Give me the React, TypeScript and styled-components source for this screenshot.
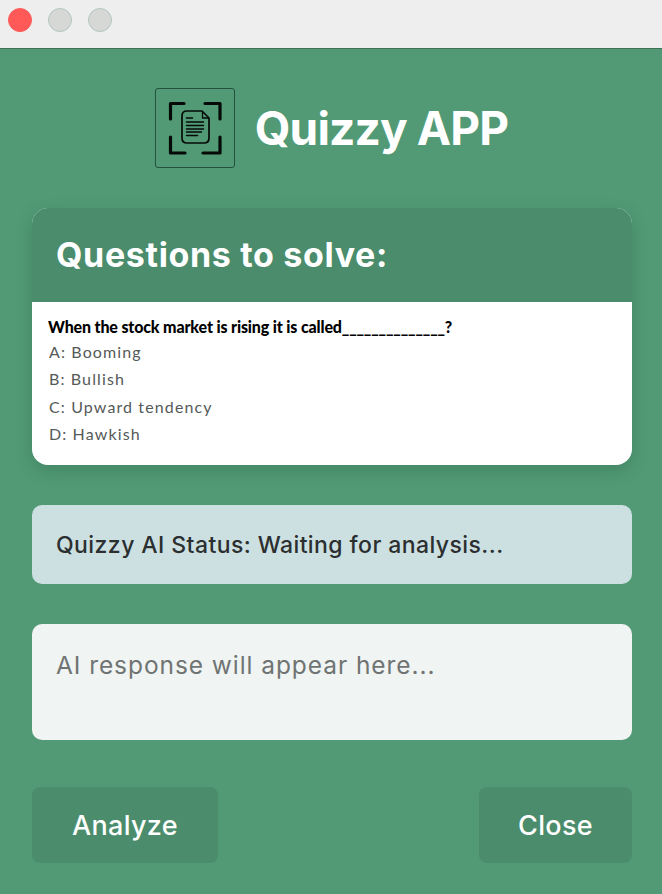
import React from "react";
import styled, { createGlobalStyle } from "styled-components";

const Global = createGlobalStyle`
  html, body { margin: 0; padding: 0; background: #519a75; }
  * { box-sizing: border-box; }
`;

const Window = styled.div`
  width: 662px;
  height: 894px;
  display: flex;
  flex-direction: column;
  overflow: hidden;
  background: #519a75;
  font-family: "Inter", "Liberation Sans", sans-serif;
`;

const TitleBar = styled.div`
  height: 49px;
  flex: none;
  display: flex;
  align-items: flex-start;
  gap: 16px;
  padding: 8px 8px 0;
  background: #eeeeee;
  border-bottom: 1px solid #3f7159;
`;

const Light = styled.span<{ $active?: boolean }>`
  width: 24px;
  height: 24px;
  border-radius: 50%;
  background: ${(p) => (p.$active ? "#ff5a57" : "#d6d8d6")};
  border: 1px solid ${(p) => (p.$active ? "#ff5a57" : "#b4c6bf")};
`;

const Content = styled.main`
  flex: 1;
  display: flex;
  flex-direction: column;
  padding: 39px 30px 0 32px;
`;

const Brand = styled.header`
  display: flex;
  align-items: center;
  justify-content: center;
  gap: 20px;
  height: 80px;
  padding-right: 1px;
`;

const LogoBox = styled.div`
  width: 80px;
  height: 80px;
  flex: none;
  display: flex;
  align-items: center;
  justify-content: center;
  border: 1px solid #24523c;
  border-radius: 3px;
`;

const AppName = styled.h1`
  margin: 0;
  font-size: 46px;
  line-height: 56px;
  font-weight: 700;
  letter-spacing: -0.85px;
  color: #ffffff;
`;

const Card = styled.section`
  margin-top: 40px;
  height: 257px;
  border-radius: 16px;
  overflow: hidden;
  background: #ffffff;
  box-shadow: 0 6px 16px rgba(40, 90, 65, 0.3);
`;

const CardHeader = styled.div`
  height: 94px;
  display: flex;
  align-items: center;
  padding: 0 24px 1px;
  background: #4a8c6c;
`;

const CardTitle = styled.h2`
  margin: 0;
  font-size: 34px;
  line-height: 40px;
  font-weight: 700;
  letter-spacing: 0.66px;
  color: #ffffff;
`;

const CardBody = styled.div`
  display: flex;
  flex-direction: column;
  padding: 15px 16px 0;
`;

const Question = styled.p`
  margin: 0 0 1px;
  font-family: "Lato", sans-serif;
  font-size: 16px;
  line-height: 20px;
  font-weight: 900;
  letter-spacing: -0.15px;
  color: #000000;
`;

const Option = styled.p`
  margin: 0;
  height: 27.3px;
  padding-left: 1px;
  font-family: "Lato", sans-serif;
  font-size: 16px;
  line-height: 27px;
  letter-spacing: 1.12px;
  color: #555a58;
`;

const StatusBar = styled.div`
  margin-top: 40px;
  height: 79px;
  display: flex;
  align-items: center;
  padding: 0 24px;
  border-radius: 10px;
  background: #cce0e2;
  font-size: 23px;
  font-weight: 500;
  letter-spacing: 0.42px;
  color: #2b2f30;
`;

const ResponseBox = styled.div`
  margin-top: 40px;
  height: 116px;
  padding: 23px 24px 0;
  border-radius: 10px;
  background: #f0f4f3;
  font-size: 24.5px;
  line-height: 36px;
  letter-spacing: 0.93px;
  color: #6f7473;
`;

const Actions = styled.div`
  margin-top: 47px;
  display: flex;
  justify-content: space-between;
`;

const ActionButton = styled.button<{ $width: number }>`
  width: ${(p) => p.$width}px;
  height: 76px;
  padding: 0;
  border: none;
  border-radius: 8px;
  background: #4a8c6c;
  font-family: inherit;
  font-size: 27px;
  font-weight: 500;
  letter-spacing: 0.3px;
  color: #ffffff;
`;

function LogoIcon() {
  return (
    <svg width="56" height="56" viewBox="0 0 56 56" fill="none" stroke="#050a07" strokeLinecap="round" strokeLinejoin="round">
      <path d="M3.5 19V3.5H17M38 3.5H53V19M3.5 37V53H18M36 53H53V37" strokeWidth="3.2" />
      <path d="M15 16q0-5 5-5h15l7 7v20q0 5-5 5H20q-5 0-5-5z" strokeWidth="1.7" />
      <path d="M35.5 12v6h5.5" strokeWidth="1.3" />
      <path d="M19.5 18h6M19.5 22h17M19.5 25.5h17M19.5 29h17M19.5 32h15M19.5 35.5h11" strokeWidth="1.5" />
    </svg>
  );
}

export default function App() {
  return (
    <Window>
      <Global />
      <TitleBar>
        <Light $active />
        <Light />
        <Light />
      </TitleBar>
      <Content>
        <Brand>
          <LogoBox>
            <LogoIcon />
          </LogoBox>
          <AppName>Quizzy APP</AppName>
        </Brand>
        <Card>
          <CardHeader>
            <CardTitle>Questions to solve:</CardTitle>
          </CardHeader>
          <CardBody>
            <Question>When the stock market is rising it is called______________?</Question>
            <Option>A: Booming</Option>
            <Option>B: Bullish</Option>
            <Option>C: Upward tendency</Option>
            <Option>D: Hawkish</Option>
          </CardBody>
        </Card>
        <StatusBar>Quizzy AI Status: Waiting for analysis...</StatusBar>
        <ResponseBox>AI response will appear here...</ResponseBox>
        <Actions>
          <ActionButton $width={186}>Analyze</ActionButton>
          <ActionButton $width={153}>Close</ActionButton>
        </Actions>
      </Content>
    </Window>
  );
}
